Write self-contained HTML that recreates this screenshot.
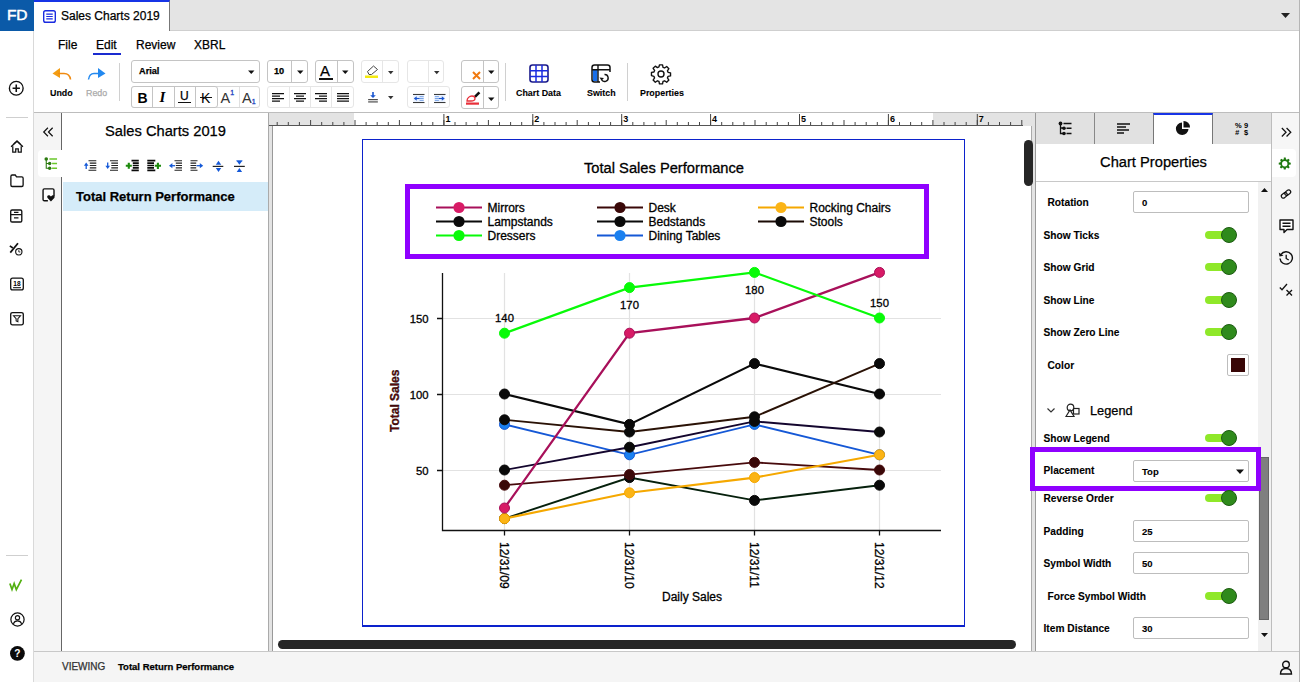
<!DOCTYPE html>
<html><head><meta charset="utf-8"><title>Sales Charts 2019</title>
<style>
*{box-sizing:border-box;margin:0;padding:0}
html,body{width:1300px;height:682px;overflow:hidden;background:#fff;font-family:"Liberation Sans",sans-serif;color:#000;-webkit-text-stroke:.25px}
.a{position:absolute}
.t{position:absolute;white-space:nowrap;line-height:1}
svg{position:absolute;overflow:visible}
/* top */
#tabbar{left:0;top:0;width:1300px;height:31px;background:#e4e4e4;border-bottom:1px solid #cfcfcf}
#fd{left:0;top:0;width:34px;height:31px;background:#0b5aa8;color:#fff;font-size:15.500px;text-align:center;line-height:29px;letter-spacing:-.3px;-webkit-text-stroke:.5px}
#tab{left:34px;top:0;width:136px;height:31px;background:#fff;border-top:2px solid #1734e6;border-right:1px solid #777}
#side{left:0;top:31px;width:34px;height:651px;background:#fff;border-right:1px solid #d9d9d9}
#nav{left:34px;top:113px;width:27px;height:538px;background:#f5f5f5}
#lp{left:61px;top:113px;width:208px;height:538px;background:#fff;border-left:1px solid #666;border-right:1px solid #aaa}
#status{left:34px;top:651px;width:1266px;height:31px;background:#f5f5f5;border-top:1px solid #c8c8c8}
.tb{position:absolute;border:1px solid #c4c4c4;border-radius:3px;background:#fff}
.tbl{border-color:#e6e6e6}
.inp{position:absolute;left:1133px;width:116px;height:22px;border:1px solid #bdbdbd;border-radius:2px;background:#fff;font-size:9.500px;line-height:21.500px;padding-left:8px;font-weight:bold;-webkit-text-stroke:.1px}
.lab{position:absolute;margin-top:1px;-webkit-text-stroke:.1px;font-size:10.200px;font-weight:bold;white-space:nowrap;line-height:14px}
.tg{position:absolute;left:1205px;width:32px;height:16px}
.tg i{position:absolute;left:0;top:4px;width:24px;height:8px;border-radius:4px;background:#8fe829}
.tg b{position:absolute;left:16px;top:0;width:16px;height:16px;border-radius:8px;background:#2f8a1c;border:1px solid #1d5c12}
svg.ch text{stroke:#000;stroke-width:.3px}
</style></head><body>
<div class="a" id="tabbar"></div>
<div class="a" id="fd">FD</div>
<div class="a" id="tab"></div>
<div class="a" id="side"></div>
<div class="a" id="nav"></div>
<div class="a" id="lp"></div>
<div class="a" id="status"></div>
<!--TOP-->
<!-- tab -->
<svg style="left:43px;top:10px" width="13" height="13" viewBox="0 0 14 14"><rect x=".75" y=".75" width="12.5" height="12.5" rx="2" fill="#fff" stroke="#1a2be0" stroke-width="1.5"/><path d="M3.5 4.5h7M3.5 7h7M3.5 9.5h7" stroke="#1a2be0" stroke-width="1.2"/></svg>
<div class="t" style="left:61px;top:10px;font-size:12px">Sales Charts 2019</div>
<svg style="left:1281px;top:13px" width="9" height="5" viewBox="0 0 9 5"><path d="M0 0h9L4.5 5z" fill="#222"/></svg>
<!-- menu -->
<div class="t" style="left:58px;top:39px;font-size:12px">File</div>
<div class="t" style="left:96px;top:39px;font-size:12px">Edit</div>
<div class="a" style="left:93px;top:53px;width:28px;height:2px;background:#1a2bd0"></div>
<div class="t" style="left:136px;top:39px;font-size:12px">Review</div>
<div class="t" style="left:194px;top:39px;font-size:12px">XBRL</div>
<div class="a" style="left:34px;top:112px;width:1266px;height:1px;background:#bdbdbd"></div>
<!--/TOP-->
<!--TOOLBAR-->
<!-- undo / redo -->
<svg style="left:51px;top:67px" width="22" height="14" viewBox="0 0 22 14"><path d="M9 1L1.5 6.5L9 11z" fill="#f39c12"/><path d="M7 6.5h6c4 0 6 2.500 6.500 6" fill="none" stroke="#f08a10" stroke-width="1.6"/></svg>
<div class="t" style="left:50px;top:89px;font-size:8.900px;font-weight:bold;-webkit-text-stroke:.1px">Undo</div>
<svg style="left:86px;top:67px" width="22" height="14" viewBox="0 0 22 14"><path d="M12 1L19.500 6.500L12 11z" fill="#2389f0"/><path d="M14 6.500h-6c-3.500 0-5 2.500-5.500 6" fill="none" stroke="#2389f0" stroke-width="1.5"/></svg>
<div class="t" style="left:86px;top:89px;font-size:8.900px;color:#aaa">Redo</div>
<div class="a" style="left:119px;top:63px;width:1px;height:38px;background:#d0d0d0"></div>
<!-- font -->
<div class="tb" style="left:131px;top:60px;width:129px;height:23px"></div>
<div class="t" style="left:139px;top:67px;font-size:9.200px;font-weight:bold">Arial</div>
<svg style="left:248px;top:70px" width="6.500" height="4" viewBox="0 0 8 5"><path d="M0 .5h8L4 5z" fill="#111"/></svg>
<div class="tb" style="left:267px;top:60px;width:41px;height:23px"></div>
<div class="a" style="left:291px;top:61px;width:1px;height:21px;background:#c4c4c4"></div>
<div class="t" style="left:274px;top:67px;font-size:9.200px;font-weight:bold">10</div>
<svg style="left:296.8px;top:70px" width="6.500" height="4" viewBox="0 0 8 5"><path d="M0 .5h8L4 5z" fill="#111"/></svg>
<!-- font colour -->
<div class="tb" style="left:315px;top:60px;width:39px;height:23px"></div>
<div class="a" style="left:337px;top:61px;width:1px;height:21px;background:#c4c4c4"></div>
<div class="t" style="left:320px;top:63px;font-size:15px">A</div>
<div class="a" style="left:319px;top:78px;width:14px;height:2px;background:#111"></div>
<svg style="left:341.8px;top:70px" width="6.500" height="4" viewBox="0 0 8 5"><path d="M0 .5h8L4 5z" fill="#111"/></svg>
<!-- highlight -->
<div class="tb tbl" style="left:361px;top:60px;width:38px;height:23px"></div>
<div class="a" style="left:382px;top:61px;width:1px;height:21px;background:#e6e6e6"></div>
<svg style="left:365px;top:64px" width="14" height="15" viewBox="0 0 14 15"><path d="M2.500 7.500L8.500 2l4 3.500L6.500 10.500h-2.500z" fill="#fff" stroke="#444" stroke-width="1"/><rect x="0" y="11.500" width="13" height="2.500" fill="#f4ea10"/></svg>
<svg style="left:387.8px;top:71.4px" width="5.500" height="3.200" viewBox="0 0 7 4"><path d="M0 0h7L3.500 4z" fill="#333"/></svg>
<!-- empty -->
<div class="tb tbl" style="left:407px;top:60px;width:37px;height:23px"></div>
<div class="a" style="left:428px;top:61px;width:1px;height:21px;background:#e6e6e6"></div>
<svg style="left:433.8px;top:71.4px" width="5.500" height="3.200" viewBox="0 0 7 4"><path d="M0 0h7L3.500 4z" fill="#333"/></svg>
<!-- x -->
<div class="tb" style="left:461px;top:60px;width:38px;height:23px"></div>
<div class="a" style="left:483px;top:61px;width:1px;height:21px;background:#c4c4c4"></div>
<svg style="left:472px;top:71px" width="9" height="9" viewBox="0 0 9 9"><path d="M1 1l7 7M8 1l-7 7" stroke="#f07a10" stroke-width="2"/></svg>
<svg style="left:487.8px;top:70px" width="6.500" height="4" viewBox="0 0 8 5"><path d="M0 .5h8L4 5z" fill="#111"/></svg>
<!-- row 2 : B I U -->
<div class="tb" style="left:131px;top:86px;width:129px;height:22px;border-color:#d8d8d8"></div>
<div class="tb" style="left:131px;top:86px;width:87px;height:22px"></div>
<div class="a" style="left:152px;top:87px;width:1px;height:20px;background:#c4c4c4"></div>
<div class="a" style="left:174px;top:87px;width:1px;height:20px;background:#c4c4c4"></div>
<div class="a" style="left:195px;top:87px;width:1px;height:20px;background:#c4c4c4"></div>
<div class="a" style="left:239px;top:87px;width:1px;height:20px;background:#e0e0e0"></div>
<div class="t" style="left:137.500px;top:90.500px;font-size:14px;font-weight:bold;-webkit-text-stroke:0">B</div>
<div class="t" style="left:159.500px;top:90px;font-size:15px;font-style:italic;font-weight:bold;-webkit-text-stroke:0;font-family:'Liberation Serif',serif">I</div>
<div class="t" style="left:180px;top:90px;font-size:12px">U</div>
<div class="a" style="left:178px;top:102px;width:13px;height:1px;background:#111"></div>
<div class="t" style="left:201px;top:90.500px;font-size:14px;-webkit-text-stroke:0">K</div>
<div class="a" style="left:199.500px;top:97px;width:12.500px;height:1px;background:#111"></div>
<div class="t" style="left:220.500px;top:90.500px;font-size:14.500px;color:#333;-webkit-text-stroke:0">A<span style="font-size:7px;color:#1a3fc0;position:relative;top:-8px;-webkit-text-stroke:.3px">1</span></div>
<div class="t" style="left:242px;top:90.500px;font-size:14.500px;color:#333;-webkit-text-stroke:0">A<span style="font-size:7px;color:#1a3fc0;position:relative;top:1px;-webkit-text-stroke:.3px">1</span></div>
<!-- align -->
<div class="tb tbl" style="left:267px;top:86px;width:87px;height:22px"></div>
<div class="a" style="left:289px;top:87px;width:1px;height:20px;background:#e6e6e6"></div>
<div class="a" style="left:310px;top:87px;width:1px;height:20px;background:#e6e6e6"></div>
<div class="a" style="left:331px;top:87px;width:1px;height:20px;background:#e6e6e6"></div>
<svg style="left:272px;top:93px" width="12" height="9" viewBox="0 0 12 9"><path d="M0 .6h12M0 3.100h8M0 5.600h12M0 8.100h8" stroke="#111" stroke-width="1.150"/></svg>
<svg style="left:294px;top:93px" width="12" height="9" viewBox="0 0 12 9"><path d="M0 .6h12M2 3.100h8M0 5.600h12M2 8.100h8" stroke="#111" stroke-width="1.150"/></svg>
<svg style="left:315px;top:93px" width="12" height="9" viewBox="0 0 12 9"><path d="M0 .6h12M4 3.100h8M0 5.600h12M4 8.100h8" stroke="#111" stroke-width="1.150"/></svg>
<svg style="left:337px;top:93px" width="12" height="9" viewBox="0 0 12 9"><path d="M0 .6h12M0 3.100h12M0 5.600h12M0 8.100h12" stroke="#111" stroke-width="1.150"/></svg>
<!-- valign -->
<svg style="left:367.500px;top:92px" width="10" height="10.500" viewBox="0 0 12 13"><path d="M6 0v5" stroke="#1a56d0" stroke-width="2"/><path d="M2.500 4h7L6 7.500z" fill="#1a56d0"/><path d="M0 9.500h12M0 12.300h12" stroke="#222" stroke-width="1.200"/></svg>
<svg style="left:387.8px;top:96.4px" width="5.500" height="3.200" viewBox="0 0 7 4"><path d="M0 0h7L3.500 4z" fill="#333"/></svg>
<!-- indent -->
<div class="tb tbl" style="left:407px;top:86px;width:43px;height:22px"></div>
<div class="a" style="left:428px;top:87px;width:1px;height:20px;background:#e6e6e6"></div>
<svg style="left:412.500px;top:93.500px" width="11.500" height="9" viewBox="0 0 14 12" preserveAspectRatio="none"><rect x=".5" y=".5" width="13" height="11" fill="#eaf2ff" stroke="#222" stroke-width="0"/><path d="M0 .6h14M0 11.400h14" stroke="#222" stroke-width="1.200"/><path d="M8 3.500h5M8 6h5M8 8.500h5" stroke="#5b8fe0" stroke-width="1"/><path d="M3 6h5" stroke="#1a56d0" stroke-width="1.500"/><path d="M4.500 3L1 6l3.500 3z" fill="#1a56d0"/></svg>
<svg style="left:433.500px;top:93.500px" width="11.500" height="9" viewBox="0 0 14 12" preserveAspectRatio="none"><rect x=".5" y=".5" width="13" height="11" fill="#eaf2ff"/><path d="M0 .6h14M0 11.400h14" stroke="#222" stroke-width="1.200"/><path d="M1 3.500h5M1 6h5M1 8.500h5" stroke="#5b8fe0" stroke-width="1"/><path d="M6 6h5" stroke="#1a56d0" stroke-width="1.500"/><path d="M9.500 3L13 6l-3.500 3z" fill="#1a56d0"/></svg>
<!-- pen -->
<div class="tb" style="left:461px;top:86px;width:38px;height:23px"></div>
<div class="a" style="left:483px;top:87px;width:1px;height:21px;background:#c4c4c4"></div>
<svg style="left:465px;top:90px" width="16" height="16" viewBox="0 0 16 16"><path d="M9 6l4.500-4.500 1.800 1.800L10.800 7.800z" fill="#111"/><path d="M2 11c0-3 2.500-5 5-5 1.500 0 3 1 3 2.500s-2 2.500-4 2.500z" fill="none" stroke="#e8303a" stroke-width="1.300"/><rect x="1" y="12.500" width="13" height="2.200" fill="#e8303a"/></svg>
<svg style="left:487.8px;top:96.5px" width="6.500" height="4" viewBox="0 0 8 5"><path d="M0 .5h8L4 5z" fill="#111"/></svg>
<div class="a" style="left:505px;top:63px;width:1px;height:38px;background:#d0d0d0"></div>
<!-- big buttons -->
<svg style="left:529px;top:64px" width="20" height="19" viewBox="0 0 20 19"><rect x="1" y="1" width="18" height="17" rx="2.500" fill="#fff" stroke="#1a1a8a" stroke-width="1.600"/><path d="M7 1v17M13 1v17M1 6.700h18M1 12.400h18" stroke="#1a2be0" stroke-width="1.500"/></svg>
<div class="t" style="left:516px;top:89px;font-size:8.900px;font-weight:bold;-webkit-text-stroke:.1px">Chart Data</div>
<svg style="left:591px;top:64px" width="21" height="20" viewBox="0 0 21 20"><rect x="1" y="1" width="18" height="17" rx="2.500" fill="#fff" stroke="#111" stroke-width="1.500"/><rect x="2" y="6" width="4.500" height="11" fill="#1a6fe8"/><path d="M7 1v17M1 5.800h18" stroke="#111" stroke-width="1.400"/><rect x="9" y="8" width="12" height="12" fill="#fff"/><path d="M10.500 15.500a3.500 3.500 0 1 0 3-5" fill="none" stroke="#111" stroke-width="1.400"/><path d="M8.500 13.500l2 3 2.500-2.500z" fill="#111"/></svg>
<div class="t" style="left:587px;top:89px;font-size:8.900px;font-weight:bold;-webkit-text-stroke:.1px">Switch</div>
<div class="a" style="left:627px;top:63px;width:1px;height:38px;background:#d0d0d0"></div>
<svg style="left:650px;top:63px" width="22" height="22" viewBox="0 0 24 24"><path fill="none" stroke="#111" stroke-width="1.500" stroke-linejoin="round" d="M10.300 2h3.400l.5 2.700 1.700.7 2.300-1.600 2.400 2.400-1.600 2.300.7 1.700 2.700.5v3.400l-2.700.5-.7 1.700 1.600 2.300-2.400 2.400-2.300-1.600-1.700.7-.5 2.700h-3.400l-.5-2.700-1.700-.7-2.300 1.600-2.400-2.400 1.600-2.300-.7-1.700L1.600 13.700v-3.400l2.700-.5.700-1.700-1.600-2.300 2.400-2.400 2.300 1.600 1.700-.7z"/><circle cx="12" cy="12" r="3.300" fill="none" stroke="#111" stroke-width="1.500"/></svg>
<div class="t" style="left:640px;top:89px;font-size:8.900px;font-weight:bold;-webkit-text-stroke:.1px">Properties</div>
<!--/TOOLBAR-->
<!--SIDE-->
<!-- left app sidebar icons -->
<svg style="left:8px;top:80px" width="16.500" height="16.500" viewBox="0 0 18 18"><circle cx="9" cy="9" r="7.500" fill="#fff" stroke="#111" stroke-width="1.500"/><path d="M9 5v8M5 9h8" stroke="#111" stroke-width="1.700"/></svg>
<div class="a" style="left:6px;top:117px;width:22px;height:1px;background:#cfcfcf"></div>
<svg style="left:9.500px;top:139.500px" width="14" height="13.500" viewBox="0 0 16 16"><path d="M1 8L8 1.500 15 8" fill="none" stroke="#111" stroke-width="1.600"/><path d="M3 7.500V14.500h3.500v-4h3v4H13V7.500" fill="none" stroke="#111" stroke-width="1.500"/><path d="M4 4.500l4-3.500 4 3.500" fill="none" stroke="#111" stroke-width="1.200"/></svg>
<svg style="left:9.500px;top:174px" width="14" height="13.500" viewBox="0 0 16 14" preserveAspectRatio="none"><path d="M1 2.500a1.500 1.500 0 0 1 1.500-1.500h3.500l1.500 2h6a1.500 1.500 0 0 1 1.500 1.500v7a1.500 1.500 0 0 1-1.500 1.500h-11a1.500 1.500 0 0 1-1.500-1.500z" fill="#fff" stroke="#111" stroke-width="1.500"/></svg>
<svg style="left:10px;top:208.500px" width="12.500" height="14" viewBox="0 0 14 15"><rect x=".8" y=".8" width="12.400" height="13.400" rx="1.500" fill="#fff" stroke="#111" stroke-width="1.500"/><path d="M1 6h12M4.500 3.500h5M4.500 9.500h5" stroke="#111" stroke-width="1.400"/></svg>
<svg style="left:9px;top:241.500px" width="14.500" height="14.500" viewBox="0 0 17 17"><path d="M1.500 12.500L10.500 1.500" stroke="#111" stroke-width="2"/><path d="M1 4.500l3.500 2.500" stroke="#111" stroke-width="2"/><circle cx="11.500" cy="11.500" r="3.700" fill="#fff" stroke="#111" stroke-width="1.300"/><path d="M11.500 9.500v2.200h1.800" fill="none" stroke="#111" stroke-width="1"/></svg>
<svg style="left:9.500px;top:277px" width="14" height="14" viewBox="0 0 16 16"><rect x=".8" y="1.300" width="14.400" height="13.400" rx="2.200" fill="#fff" stroke="#111" stroke-width="1.500"/><path d="M3.500 12.200h9" stroke="#111" stroke-width="1.200"/><text x="8" y="10.200" font-size="7.500" font-weight="bold" text-anchor="middle" font-family="Liberation Sans,sans-serif">18</text></svg>
<svg style="left:9.500px;top:311.500px" width="14" height="13.500" viewBox="0 0 16 16" preserveAspectRatio="none"><rect x=".8" y=".8" width="14.400" height="14.400" rx="2.200" fill="#fff" stroke="#111" stroke-width="1.500"/><path d="M4 4.500h8l-3 3.500v3.500l-2 -1v-2.500z" fill="none" stroke="#111" stroke-width="1.200"/></svg>
<div class="a" style="left:6px;top:555px;width:22px;height:1px;background:#cfcfcf"></div>
<svg style="left:8.500px;top:578.500px" width="15.500" height="12.500" viewBox="0 0 18 14"><path d="M1 5l2.500 7 2.500-7 2.500 7L14.500 .5" fill="none" stroke="#52b010" stroke-width="2" stroke-linejoin="miter"/></svg>
<svg style="left:9.500px;top:611.500px" width="15" height="15" viewBox="0 0 17 17"><circle cx="8.500" cy="8.500" r="7.500" fill="#fff" stroke="#111" stroke-width="1.400"/><circle cx="8.500" cy="6.500" r="2.400" fill="none" stroke="#111" stroke-width="1.300"/><path d="M3.800 13.500c.8-2.500 2.500-3.500 4.700-3.500s3.900 1 4.700 3.500" fill="none" stroke="#111" stroke-width="1.300"/></svg>
<svg style="left:9.500px;top:646px" width="14.800" height="14.800" viewBox="0 0 16 16"><circle cx="8" cy="8" r="8" fill="#0a0a0a"/><text x="8" y="12" font-size="11" font-weight="bold" fill="#fff" text-anchor="middle" font-family="Liberation Sans,sans-serif">?</text></svg>
<!-- nav column -->
<svg style="left:42.500px;top:127px" width="10.500" height="10" viewBox="0 0 10 9"><path d="M4.700 .500l-4 4 4 4M9.200 .500l-4 4 4 4" fill="none" stroke="#111" stroke-width="1.150"/></svg>
<div class="a" style="left:38px;top:150px;width:24px;height:27px;background:#fff;border-radius:4px 0 0 4px"></div>
<svg style="left:43.500px;top:156.500px" width="13.500" height="13.500" viewBox="0 0 15 15"><path d="M2.500 2v10.500h3M2.500 7.200h3" fill="none" stroke="#2c7a10" stroke-width="1.200"/><circle cx="2.500" cy="2.200" r="2" fill="#2c7a10"/><circle cx="6.300" cy="7.200" r="1.900" fill="#2c7a10"/><circle cx="6.300" cy="12.500" r="1.900" fill="#2c7a10"/><path d="M6 2.200h8.500M9 7.200h5.500M9 12.500h5.500" stroke="#6ac82a" stroke-width="1.800"/></svg>
<svg style="left:41.500px;top:188px" width="13.500" height="14" viewBox="0 0 15 16"><path d="M13.500 9V2.500a1.500 1.500 0 0 0-1.500-1.500h-9.500a1.500 1.500 0 0 0-1.500 1.500v10.500a1.500 1.500 0 0 0 1.500 1.500h4" fill="#fff" stroke="#111" stroke-width="1.600"/><path d="M10 15.300l-3.800-4c-1.500-2 .8-4 2.500-2.600l1.300 1.100 1.300-1.100c1.700-1.400 4 .6 2.500 2.600z" fill="#111"/></svg>
<!--/SIDE-->
<!--LEFTPANEL-->
<div class="t" style="left:63px;top:124px;width:205px;text-align:center;font-size:14.700px">Sales Charts 2019</div>
<div class="a" style="left:63px;top:182px;width:205px;height:29px;background:#d5ecf9"></div>
<div class="t" style="left:76px;top:190px;font-size:13px;font-weight:bold">Total Return Performance</div>
<!-- outline tool icons -->
<svg style="left:0;top:0" width="260" height="180" viewBox="0 0 260 180"><path d="M88.5 160.7H96.3M89.8 163.1H96.3M89.8 165.5H96.3M89.8 167.9H96.3M88.5 170.3H96.3" stroke="#222" stroke-width="1.100" fill="none"/><path d="M86.200 162.500l-2.300 3.300h4.600z" fill="#1559d8"/><path d="M86.200 165v4" stroke="#1559d8" stroke-width="1.300"/><path d="M110.0 160.7H118.0M111.3 163.1H118.0M111.3 165.5H118.0M111.3 167.9H118.0M110.0 170.3H118.0" stroke="#222" stroke-width="1.100" fill="none"/><path d="M107.700 169l-2.300-3.300h4.600z" fill="#1559d8"/><path d="M107.700 162.500v4" stroke="#1559d8" stroke-width="1.300"/><path d="M131.5 160.7H138.8M132.8 163.1H138.8M132.8 165.5H138.8M132.8 167.9H138.8M131.5 170.3H138.8" stroke="#0a0a0a" stroke-width="1.700" fill="none"/><path d="M125.800 165.800h6M128.800 162.800v6" stroke="#1c8a0c" stroke-width="2.100"/><path d="M147.3 160.7H155.3M147.3 163.1H154.0M147.3 165.5H154.0M147.3 167.9H154.0M147.3 170.3H155.3" stroke="#0a0a0a" stroke-width="1.700" fill="none"/><path d="M154.800 165.800h6.200M157.900 162.700v6.200" stroke="#1c8a0c" stroke-width="2.100"/><path d="M174.5 160.7H182.0M175.8 163.1H182.0M175.8 165.5H182.0M175.8 167.9H182.0M174.5 170.3H182.0" stroke="#222" stroke-width="1.100" fill="none"/><path d="M169 165.700l3.400-2.600v5.200z" fill="#1559d8"/><path d="M171 165.700h4" stroke="#1559d8" stroke-width="1.300"/><path d="M190.5 160.7H197.5M190.5 163.1H196.2M190.5 165.5H196.2M190.5 167.9H196.2M190.5 170.3H197.5" stroke="#222" stroke-width="1.100" fill="none"/><path d="M203.200 165.700l-3.400-2.600v5.200z" fill="#1559d8"/><path d="M196.500 165.700h4" stroke="#1559d8" stroke-width="1.300"/><path d="M212.700 166.400h10.600" stroke="#222" stroke-width="1.200"/><path d="M218.500 160.800l2.700 4h-5.400zM218.500 172l2.700-4h-5.400z" fill="#1559d8"/><path d="M234 166.400h10.800" stroke="#222" stroke-width="1.200"/><path d="M239.400 164.800l2.700-3.800h-5.400zM239.400 168l2.700 4h-5.400z" fill="#1559d8"/><path d="M236.400 160.800h6" stroke="#1559d8" stroke-width="1"/></svg>
<!--/LEFTPANEL-->
<!--MAIN-->
<div class="a" style="left:269px;top:113px;width:766px;height:13px;background:#e3e3e3"></div>
<div class="a" style="left:354px;top:113px;width:579px;height:13px;background:#fff"></div>
<div class="a" style="left:1023px;top:113px;width:12px;height:13px;background:#e3e3e3"></div>
<div class="a" style="left:269px;top:125px;width:754px;height:1px;background:#555"></div>
<div class="a" style="left:269px;top:126px;width:4px;height:525px;background:#e3e3e3;border-right:1px solid #999"></div>
<div class="a" style="left:1031px;top:126px;width:4px;height:525px;background:#e3e3e3;border-left:1px solid #aaa"></div>
<svg style="left:0;top:0" width="1300" height="130"><path d="M277.2 125 v-3M288.3 125 v-3M299.4 125 v-3M310.6 125 v-5M321.7 125 v-3M332.8 125 v-3M343.9 125 v-3M355.0 125 v-5M366.1 125 v-3M377.2 125 v-3M388.3 125 v-3M399.4 125 v-5M410.6 125 v-3M421.7 125 v-3M432.8 125 v-3M443.9 125 v-5M455.0 125 v-3M466.1 125 v-3M477.2 125 v-3M488.4 125 v-5M499.5 125 v-3M510.6 125 v-3M521.7 125 v-3M532.8 125 v-5M543.9 125 v-3M555.0 125 v-3M566.1 125 v-3M577.2 125 v-5M588.4 125 v-3M599.5 125 v-3M610.6 125 v-3M621.7 125 v-5M632.8 125 v-3M643.9 125 v-3M655.0 125 v-3M666.2 125 v-5M677.3 125 v-3M688.4 125 v-3M699.5 125 v-3M710.6 125 v-5M721.7 125 v-3M732.8 125 v-3M743.9 125 v-3M755.0 125 v-5M766.2 125 v-3M777.3 125 v-3M788.4 125 v-3M799.5 125 v-5M810.6 125 v-3M821.7 125 v-3M832.8 125 v-3M844.0 125 v-5M855.1 125 v-3M866.2 125 v-3M877.3 125 v-3M888.4 125 v-5M899.5 125 v-3M910.6 125 v-3M921.7 125 v-3M932.9 125 v-5M944.0 125 v-3M955.1 125 v-3M966.2 125 v-3M977.3 125 v-5M988.4 125 v-3M999.5 125 v-3M1010.6 125 v-3M1021.8 125 v-5" stroke="#444" stroke-width="1" fill="none"/>
<path d="M443.9 125v-11" stroke="#444" stroke-width="1"/><text x="445.4" y="121.500" font-size="9" font-weight="bold" font-family="Liberation Sans,sans-serif">1</text>
<path d="M532.8 125v-11" stroke="#444" stroke-width="1"/><text x="534.3" y="121.500" font-size="9" font-weight="bold" font-family="Liberation Sans,sans-serif">2</text>
<path d="M621.7 125v-11" stroke="#444" stroke-width="1"/><text x="623.2" y="121.500" font-size="9" font-weight="bold" font-family="Liberation Sans,sans-serif">3</text>
<path d="M710.6 125v-11" stroke="#444" stroke-width="1"/><text x="712.1" y="121.500" font-size="9" font-weight="bold" font-family="Liberation Sans,sans-serif">4</text>
<path d="M799.5 125v-11" stroke="#444" stroke-width="1"/><text x="801.0" y="121.500" font-size="9" font-weight="bold" font-family="Liberation Sans,sans-serif">5</text>
<path d="M888.4 125v-11" stroke="#444" stroke-width="1"/><text x="889.9" y="121.500" font-size="9" font-weight="bold" font-family="Liberation Sans,sans-serif">6</text>
<path d="M977.3 125v-11" stroke="#444" stroke-width="1"/><text x="978.8" y="121.500" font-size="9" font-weight="bold" font-family="Liberation Sans,sans-serif">7</text>
</svg>
<div class="a" style="left:362px;top:139px;width:603px;height:488px;border:1px solid #0c22cc;border-bottom-width:2px;background:#fff"></div>
<div class="a" style="left:1024px;top:140px;width:9px;height:46px;border-radius:4.500px;background:#262626"></div>
<div class="a" style="left:278px;top:640px;width:738px;height:9px;border-radius:4.500px;background:#262626"></div>
<svg class="ch" style="left:0;top:0" width="1300" height="682" font-family="Liberation Sans,sans-serif">
<text x="664" y="172.500" font-size="14.700" text-anchor="middle">Total Sales Performance</text>
<rect x="407.500" y="186.500" width="519" height="70" fill="#fff" stroke="#8f00ff" stroke-width="5"/>
<path d="M504.5 273V530M629.5 273V530M754.5 273V530M879.5 273V530M442 470.5H941M442 394.5H941M442 318.5H941" stroke="#e2e2e2" stroke-width="1.200" fill="none"/>
<path d="M442.500 273V530.500H941M504.5 530.500v5M629.5 530.500v5M754.5 530.500v5M879.5 530.500v5M437 470.5h5.500M437 394.5h5.500M437 318.5h5.500" stroke="#111" stroke-width="1.300" fill="none"/>
<text x="428.500" y="474.5" font-size="11.300" text-anchor="end">50</text>
<text x="428.500" y="398.5" font-size="11.300" text-anchor="end">100</text>
<text x="428.500" y="322.5" font-size="11.300" text-anchor="end">150</text>
<polyline points="504.5,518.6 629.5,477.6 754.5,500.4 879.5,485.2" fill="none" stroke="#06200c" stroke-width="1.9"/>
<circle cx="504.5" cy="518.6" r="5" fill="#0a0a0a" stroke="#0a0a0a" stroke-width="1"/>
<circle cx="629.5" cy="477.6" r="5" fill="#0a0a0a" stroke="#0a0a0a" stroke-width="1"/>
<circle cx="754.5" cy="500.4" r="5" fill="#0a0a0a" stroke="#0a0a0a" stroke-width="1"/>
<circle cx="879.5" cy="485.2" r="5" fill="#0a0a0a" stroke="#0a0a0a" stroke-width="1"/>
<polyline points="504.5,424.4 629.5,454.8 754.5,424.4 879.5,454.8" fill="none" stroke="#1558d6" stroke-width="1.9"/>
<circle cx="504.5" cy="424.4" r="5" fill="#1a80f0" stroke="#1558d6" stroke-width="1"/>
<circle cx="629.5" cy="454.8" r="5" fill="#1a80f0" stroke="#1558d6" stroke-width="1"/>
<circle cx="754.5" cy="424.4" r="5" fill="#1a80f0" stroke="#1558d6" stroke-width="1"/>
<circle cx="879.5" cy="454.8" r="5" fill="#1a80f0" stroke="#1558d6" stroke-width="1"/>
<polyline points="504.5,394.0 629.5,424.4 754.5,363.6 879.5,394.0" fill="none" stroke="#0a0a0a" stroke-width="2.2"/>
<circle cx="504.5" cy="394.0" r="5" fill="#0a0a0a" stroke="#0a0a0a" stroke-width="1"/>
<circle cx="629.5" cy="424.4" r="5" fill="#0a0a0a" stroke="#0a0a0a" stroke-width="1"/>
<circle cx="754.5" cy="363.6" r="5" fill="#0a0a0a" stroke="#0a0a0a" stroke-width="1"/>
<circle cx="879.5" cy="394.0" r="5" fill="#0a0a0a" stroke="#0a0a0a" stroke-width="1"/>
<polyline points="504.5,470.0 629.5,447.2 754.5,421.4 879.5,432.0" fill="none" stroke="#14062e" stroke-width="1.9"/>
<circle cx="504.5" cy="470.0" r="5" fill="#0a0a0a" stroke="#0a0a0a" stroke-width="1"/>
<circle cx="629.5" cy="447.2" r="5" fill="#0a0a0a" stroke="#0a0a0a" stroke-width="1"/>
<circle cx="754.5" cy="421.4" r="5" fill="#0a0a0a" stroke="#0a0a0a" stroke-width="1"/>
<circle cx="879.5" cy="432.0" r="5" fill="#0a0a0a" stroke="#0a0a0a" stroke-width="1"/>
<polyline points="504.5,419.8 629.5,432.0 754.5,416.8 879.5,363.6" fill="none" stroke="#2a1206" stroke-width="1.9"/>
<circle cx="504.5" cy="419.8" r="5" fill="#0a0a0a" stroke="#0a0a0a" stroke-width="1"/>
<circle cx="629.5" cy="432.0" r="5" fill="#0a0a0a" stroke="#0a0a0a" stroke-width="1"/>
<circle cx="754.5" cy="416.8" r="5" fill="#0a0a0a" stroke="#0a0a0a" stroke-width="1"/>
<circle cx="879.5" cy="363.6" r="5" fill="#0a0a0a" stroke="#0a0a0a" stroke-width="1"/>
<polyline points="504.5,485.2 629.5,474.6 754.5,462.4 879.5,470.0" fill="none" stroke="#470a0c" stroke-width="1.9"/>
<circle cx="504.5" cy="485.2" r="5" fill="#3a0808" stroke="#470a0c" stroke-width="1"/>
<circle cx="629.5" cy="474.6" r="5" fill="#3a0808" stroke="#470a0c" stroke-width="1"/>
<circle cx="754.5" cy="462.4" r="5" fill="#3a0808" stroke="#470a0c" stroke-width="1"/>
<circle cx="879.5" cy="470.0" r="5" fill="#3a0808" stroke="#470a0c" stroke-width="1"/>
<polyline points="504.5,518.6 629.5,492.8 754.5,477.6 879.5,454.8" fill="none" stroke="#f5a800" stroke-width="2.1"/>
<circle cx="504.5" cy="518.6" r="5" fill="#fbb416" stroke="#f5a800" stroke-width="1"/>
<circle cx="629.5" cy="492.8" r="5" fill="#fbb416" stroke="#f5a800" stroke-width="1"/>
<circle cx="754.5" cy="477.6" r="5" fill="#fbb416" stroke="#f5a800" stroke-width="1"/>
<circle cx="879.5" cy="454.8" r="5" fill="#fbb416" stroke="#f5a800" stroke-width="1"/>
<polyline points="504.5,508.0 629.5,333.2 754.5,318.0 879.5,272.4" fill="none" stroke="#a8105a" stroke-width="2.3"/>
<circle cx="504.5" cy="508.0" r="5" fill="#d81b66" stroke="#a8105a" stroke-width="1"/>
<circle cx="629.5" cy="333.2" r="5" fill="#d81b66" stroke="#a8105a" stroke-width="1"/>
<circle cx="754.5" cy="318.0" r="5" fill="#d81b66" stroke="#a8105a" stroke-width="1"/>
<circle cx="879.5" cy="272.4" r="5" fill="#d81b66" stroke="#a8105a" stroke-width="1"/>
<polyline points="504.5,333.2 629.5,287.6 754.5,272.4 879.5,318.0" fill="none" stroke="#08fa08" stroke-width="2.3"/>
<circle cx="504.5" cy="333.2" r="5" fill="#08fa08" stroke="#08fa08" stroke-width="1"/>
<circle cx="629.5" cy="287.6" r="5" fill="#08fa08" stroke="#08fa08" stroke-width="1"/>
<circle cx="754.5" cy="272.4" r="5" fill="#08fa08" stroke="#08fa08" stroke-width="1"/>
<circle cx="879.5" cy="318.0" r="5" fill="#08fa08" stroke="#08fa08" stroke-width="1"/>
<text x="504.5" y="322.0" font-size="11.300" text-anchor="middle">140</text>
<text x="629.5" y="308.5" font-size="11.300" text-anchor="middle">170</text>
<text x="754.5" y="294.0" font-size="11.300" text-anchor="middle">180</text>
<text x="879.5" y="306.5" font-size="11.300" text-anchor="middle">150</text>
<text transform="translate(500.0 542) rotate(90)" font-size="12">12/31/09</text>
<text transform="translate(625.0 542) rotate(90)" font-size="12">12/31/10</text>
<text transform="translate(750.0 542) rotate(90)" font-size="12">12/31/11</text>
<text transform="translate(875.0 542) rotate(90)" font-size="12">12/31/12</text>
<text x="692" y="601" font-size="12" text-anchor="middle">Daily Sales</text>
<text transform="translate(399 432) rotate(-90)" font-size="12" font-weight="bold" fill="#5a0a0a" stroke="#5a0a0a">Total Sales</text>
<path d="M436 207.5h46" stroke="#a8105a" stroke-width="2"/><circle cx="459" cy="207.5" r="5.600" fill="#d81b66"/>
<text x="487.5" y="211.5" font-size="12">Mirrors</text>
<path d="M436 221.5h46" stroke="#0a0a0a" stroke-width="2"/><circle cx="459" cy="221.5" r="5.600" fill="#0a0a0a"/>
<text x="487.5" y="225.5" font-size="12">Lampstands</text>
<path d="M436 235.5h46" stroke="#08fa08" stroke-width="2"/><circle cx="459" cy="235.5" r="5.600" fill="#08fa08"/>
<text x="487.5" y="239.5" font-size="12">Dressers</text>
<path d="M597 207.5h46" stroke="#3a0808" stroke-width="2"/><circle cx="620" cy="207.5" r="5.600" fill="#3a0808"/>
<text x="648.5" y="211.5" font-size="12">Desk</text>
<path d="M597 221.5h46" stroke="#0a0a0a" stroke-width="2"/><circle cx="620" cy="221.5" r="5.600" fill="#0a0a0a"/>
<text x="648.5" y="225.5" font-size="12">Bedstands</text>
<path d="M597 235.5h46" stroke="#1558d6" stroke-width="2"/><circle cx="620" cy="235.5" r="5.600" fill="#1a80f0"/>
<text x="648.5" y="239.5" font-size="12">Dining Tables</text>
<path d="M758 207.5h46" stroke="#f5a800" stroke-width="2"/><circle cx="781" cy="207.5" r="5.600" fill="#fbb416"/>
<text x="809.5" y="211.5" font-size="12">Rocking Chairs</text>
<path d="M758 221.5h46" stroke="#1a0a04" stroke-width="2"/><circle cx="781" cy="221.5" r="5.600" fill="#0a0a0a"/>
<text x="809.5" y="225.5" font-size="12">Stools</text>
</svg>
<!--/MAIN-->
<!--RIGHT-->
<div class="a" style="left:1035px;top:113px;width:237px;height:538px;background:#fff;border-left:1px solid #999;border-right:1px solid #bdbdbd"></div>
<div class="a" style="left:1036px;top:113px;width:235px;height:31px;background:#e1e1e1"></div>
<div class="a" style="left:1153px;top:113px;width:60px;height:31px;background:#fff;border-top:2px solid #1734e6;border-left:1px solid #777;border-right:1px solid #777"></div>
<div class="a" style="left:1094px;top:113px;width:1px;height:31px;background:#888"></div>
<svg style="left:1058px;top:121px" width="14" height="15" viewBox="0 0 14 15"><path d="M2.500 1v11.500h3M2.500 7h3" fill="none" stroke="#111" stroke-width="1.300"/><circle cx="2.500" cy="2.500" r="1.900" fill="#111"/><circle cx="6" cy="7.200" r="1.800" fill="#111"/><circle cx="6" cy="12.500" r="1.800" fill="#111"/><path d="M5.500 2.500h8M8.500 7.200h5M8.500 12.500h5" stroke="#111" stroke-width="1.600"/></svg>
<svg style="left:1117px;top:123px" width="13" height="11" viewBox="0 0 13 11"><path d="M0 1h13M0 4h9M0 7h12M0 10h7" stroke="#111" stroke-width="1.400"/></svg>
<svg style="left:1175px;top:121px" width="15" height="15" viewBox="0 0 15 15"><path d="M7 1.500A6.300 6.300 0 1 0 13.500 8H7z" fill="#111"/><path d="M8.500 0A6.300 6.300 0 0 1 15 6.500H8.500z" fill="#111"/></svg>
<svg style="left:1235px;top:121px" width="15" height="15" viewBox="0 0 15 15" font-family="Liberation Sans,sans-serif" font-weight="bold" font-size="7.500"><text x="0" y="6.500">%</text><text x="9" y="6.500">9</text><text x="0" y="14" font-style="italic">#</text><text x="9" y="14">$</text></svg>
<div class="t" style="left:1036px;top:155px;width:235px;text-align:center;font-size:14.700px">Chart Properties</div>
<div class="a" style="left:1036px;top:181px;width:235px;height:1px;background:#c8c8c8"></div>
<div class="a" style="left:1258px;top:182px;width:13px;height:469px;background:#f1f1f1"></div>
<div class="a" style="left:1259px;top:457px;width:10px;height:163px;background:#7f7f7f;border:1px solid #666"></div>
<svg style="left:1261px;top:188px" width="7" height="4" viewBox="0 0 7 4"><path d="M0 4h7L3.500 0z" fill="#111"/></svg>
<svg style="left:1261px;top:633px" width="7" height="4" viewBox="0 0 7 4"><path d="M0 0h7L3.500 4z" fill="#111"/></svg>
<div class="lab" style="left:1047.5px;top:195px">Rotation</div>
<div class="inp" style="top:191px">0</div>
<div class="lab" style="left:1043.5px;top:228px">Show Ticks</div>
<div class="tg" style="top:227px"><i></i><b></b></div>
<div class="lab" style="left:1043.5px;top:260px">Show Grid</div>
<div class="tg" style="top:259px"><i></i><b></b></div>
<div class="lab" style="left:1043.5px;top:293px">Show Line</div>
<div class="tg" style="top:292px"><i></i><b></b></div>
<div class="lab" style="left:1043.5px;top:325px">Show Zero Line</div>
<div class="tg" style="top:324px"><i></i><b></b></div>
<div class="lab" style="left:1047.5px;top:358px">Color</div>
<div class="a" style="left:1227px;top:354px;width:22px;height:22px;border:1px solid #bdbdbd;border-radius:2px;background:#fff"></div><div class="a" style="left:1231px;top:358px;width:14px;height:14px;background:#380606"></div>
<svg style="left:1047px;top:408px" width="8" height="5" viewBox="0 0 8 5"><path d="M.500 .500l3.500 3.500 3.500-3.500" fill="none" stroke="#333" stroke-width="1.200"/></svg>
<svg style="left:1065px;top:403px" width="16" height="15" viewBox="0 0 16 15"><circle cx="5.500" cy="4.500" r="3.300" fill="#fff" stroke="#222" stroke-width="1.200"/><rect x="8.500" y="5.500" width="5.500" height="5.500" fill="#fff" stroke="#222" stroke-width="1.200"/><path d="M1 13.500l4-6.500 4 6.500z" fill="#fff" stroke="#222" stroke-width="1.200"/></svg>
<div class="t" style="left:1090px;top:404.500px;font-size:12.800px">Legend</div>
<div class="lab" style="left:1043.5px;top:431px">Show Legend</div>
<div class="tg" style="top:430px"><i></i><b></b></div>
<div class="a" style="left:1030px;top:447px;width:231px;height:44px;border:5px solid #8f00ff;background:#fff"></div>
<div class="lab" style="left:1043.5px;top:463px">Placement</div>
<div class="inp" style="top:460px;height:22px">Top</div><svg style="left:1236px;top:469px" width="8" height="5" viewBox="0 0 8 5"><path d="M0 .500h8L4 5z" fill="#111"/></svg>
<div class="lab" style="left:1043.5px;top:491px">Reverse Order</div>
<div class="tg" style="top:490px"><i></i><b></b></div>
<div class="lab" style="left:1043.5px;top:524px">Padding</div>
<div class="inp" style="top:520px">25</div>
<div class="lab" style="left:1043.5px;top:556px">Symbol Width</div>
<div class="inp" style="top:552px">50</div>
<div class="lab" style="left:1047.5px;top:589px">Force Symbol Width</div>
<div class="tg" style="top:588px"><i></i><b></b></div>
<div class="lab" style="left:1043.5px;top:621px">Item Distance</div>
<div class="inp" style="top:617px">30</div>
<div class="a" style="left:1272px;top:113px;width:28px;height:538px;background:#f6f6f6"></div>
<div class="a" style="left:1272px;top:149px;width:24px;height:28px;background:#fff;border-radius:0 4px 4px 0"></div>
<svg style="left:1281px;top:126.500px" width="10.500" height="10.500" viewBox="0 0 10 9"><path d="M.800 .500l4 4-4 4M5.300 .500l4 4-4 4" fill="none" stroke="#111" stroke-width="1.200"/></svg>
<svg style="left:1278px;top:156.500px" width="13.500" height="13.500" viewBox="0 0 24 24"><path fill="#1f7a10" d="M10.300 1h3.400l.5 3 1.700.7 2.500-1.800 2.400 2.400-1.800 2.500.7 1.700 3 .5v3.400l-3 .5-.7 1.700 1.800 2.500-2.400 2.400-2.500-1.800-1.700.7-.5 3h-3.400l-.5-3-1.700-.7-2.500 1.800-2.400-2.400 1.800-2.500-.7-1.700-3-.5v-3.400l3-.5.700-1.700L3.700 5.300l2.400-2.400 2.500 1.800 1.700-.7z"/><circle cx="12" cy="12" r="4.800" fill="#fff"/></svg>
<svg style="left:1280px;top:188px" width="12" height="12" viewBox="0 0 14 14"><g transform="rotate(-38 7 7)" fill="none" stroke="#111" stroke-width="1.400"><rect x=".7" y="4.700" width="7.500" height="4.600" rx="2.300"/><rect x="5.800" y="4.700" width="7.500" height="4.600" rx="2.300"/></g></svg>
<svg style="left:1279px;top:219px" width="15" height="15" viewBox="0 0 15 15"><path d="M1 1h13v9.500h-6l-3 3v-3h-4z" fill="#fff" stroke="#111" stroke-width="1.400" stroke-linejoin="round"/><path d="M3.500 4.300h8M3.500 7.200h8" stroke="#111" stroke-width="1.400"/></svg>
<svg style="left:1278px;top:250px" width="16" height="16" viewBox="0 0 16 16"><path d="M3 4.500A6.200 6.200 0 1 1 2 8.500" fill="none" stroke="#111" stroke-width="1.400"/><path d="M.800 2.500l.7 4 4-.7z" fill="#111"/><path d="M8.200 4.700v3.800l2.500 1.500" fill="none" stroke="#111" stroke-width="1.300"/></svg>
<svg style="left:1279px;top:283px" width="15" height="14" viewBox="0 0 15 14"><path d="M.800 4.500l2.200 2.200L8 1" fill="none" stroke="#111" stroke-width="1.300"/><path d="M7.500 7l5.500 5.500M13 7l-5.500 5.500" stroke="#111" stroke-width="1.300"/></svg>
<!--/RIGHT-->
<div class="a" style="left:1299px;top:0;width:1px;height:682px;background:#b5b5b5"></div>
<!--STATUS-->
<div class="t" style="left:62px;top:662px;font-size:10px;color:#333">VIEWING</div>
<div class="t" style="left:118px;top:662px;font-size:9.500px;font-weight:bold">Total Return Performance</div>
<svg style="left:1279px;top:660px" width="14" height="15" viewBox="0 0 14 15"><circle cx="7" cy="4.500" r="3.300" fill="none" stroke="#111" stroke-width="1.400"/><path d="M1.500 14c0-4 2.500-5.500 5.500-5.500s5.500 1.500 5.500 5.500z" fill="none" stroke="#111" stroke-width="1.400"/></svg>
<!--/STATUS-->
</body></html>
